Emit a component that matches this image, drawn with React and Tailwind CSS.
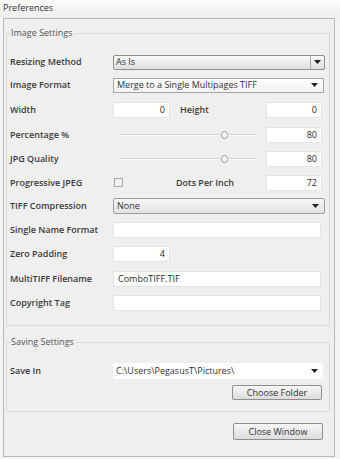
import React from "react";

const Arrow = () => (
  <svg width="7" height="4" viewBox="0 0 7 4" className="shrink-0">
    <path d="M0 0 L7 0 L3.5 4 Z" fill="#222" />
  </svg>
);

function Row({ label, h, children }) {
  return (
    <div className="flex items-center" style={{ height: h }}>
      <div className="w-[103px] shrink-0 font-semibold text-[#3b3b3b]">{label}</div>
      {children}
    </div>
  );
}

function Input({ w, value, align = "right" }) {
  return (
    <div
      className={`h-[16px] bg-white border border-[#e4e4e4] flex items-center px-[4px] text-[#2a2a2a] ${
        align === "right" ? "justify-end" : "justify-start"
      }`}
      style={{ width: w }}
    >
      {value}
    </div>
  );
}

function Slider({ pos }) {
  return (
    <div className="w-[135px] h-[16px] relative ml-[7px] flex items-center">
      <div className="w-full h-[2px] bg-[#d4d4d4] border-b border-[#f8f8f8]" />
      <div
        className="absolute top-[4px] w-[7px] h-[8px] rounded-full border border-[#9a9a9a] bg-[#f4f4f4]"
        style={{ left: pos }}
      />
    </div>
  );
}

function GroupLabel({ children }) {
  return (
    <div className="-mt-[7px] ml-[1px] w-fit h-[12px] bg-[#efefef] pr-[2px] text-[#555]">
      {children}
    </div>
  );
}

export default function App() {
  return (
    <div
      className="w-[340px] h-[459px] bg-[#f4f4f4] text-[9px] leading-[12px] text-[#2a2a2a] overflow-hidden"
      style={{ fontFamily: '"Open Sans", "Noto Sans", sans-serif' }}
    >
      <div className="h-[18px] pl-[3px] pt-[2px] text-[#333] bg-gradient-to-b from-[#fbfbfb] to-[#eeeeee]">
        Preferences
      </div>
      <div className="ml-[3px] w-[332px] h-[439px] border border-[#b9b9b9] bg-[#efefef] flex flex-col">
        {/* Image Settings */}
        <div className="mt-[14px] ml-[2px] mr-[4px] border border-[#d9d9d9] rounded-[2px] pl-[3px] pr-[4px] pb-[10px]">
          <GroupLabel>Image Settings</GroupLabel>
          <div className="mt-[12px]">
            <Row label="Resizing Method" h={22}>
              <div className="w-[213px] h-[15px] border border-[#8f8f8f] rounded-[2px] bg-gradient-to-b from-[#fafafa] to-[#dedede] flex items-stretch">
                <div className="flex-1 pl-[2px] flex items-center text-[#333]">As Is</div>
                <div className="w-[14px] border-l border-[#a8a8a8] flex items-center justify-center">
                  <Arrow />
                </div>
              </div>
            </Row>
            <Row label="Image Format" h={24}>
              <div className="w-[211px] h-[15px] border border-[#a5a5a5] bg-gradient-to-b from-[#ffffff] to-[#f0f0f0] flex items-center pl-[3px] pr-[5px]">
                <div className="flex-1 text-[#333]">Merge to a Single Multipages TIFF</div>
                <Arrow />
              </div>
            </Row>
            <Row label="Width" h={25}>
              <Input w={57} value="0" />
              <div className="w-[96px] pl-[10px] font-semibold text-[#3b3b3b]">Height</div>
              <Input w={56} value="0" />
            </Row>
            <Row label="Percentage %" h={25}>
              <Slider pos={101} />
              <div className="w-[11px]" />
              <Input w={56} value="80" />
            </Row>
            <Row label="JPG Quality" h={24}>
              <Slider pos={101} />
              <div className="w-[11px]" />
              <Input w={56} value="80" />
            </Row>
            <Row label="Progressive JPEG" h={23}>
              <div className="ml-[1px] w-[9px] h-[9px] border border-[#a9a9a9] bg-gradient-to-br from-[#e8e8e8] to-[#fafafa]" />
              <div className="w-[143px] pl-[53px] font-semibold text-[#3b3b3b]">Dots Per Inch</div>
              <Input w={56} value="72" />
            </Row>
            <Row label="TIFF Compression" h={24}>
              <div className="w-[212px] h-[16px] border border-[#9c9c9c] rounded-[2px] bg-gradient-to-b from-[#f6f6f6] to-[#e2e2e2] flex items-center pl-[3px] pr-[5px]">
                <div className="flex-1 text-[#333]">None</div>
                <Arrow />
              </div>
            </Row>
            <Row label="Single Name Format" h={24}>
              <Input w={208} value="" />
            </Row>
            <Row label="Zero Padding" h={24}>
              <Input w={57} value="4" />
            </Row>
            <Row label="MultiTIFF Filename" h={25}>
              <Input w={208} value="ComboTIFF.TIF" align="left" />
            </Row>
            <Row label="Copyright Tag" h={24}>
              <Input w={208} value="" />
            </Row>
          </div>
        </div>

        {/* Saving Settings */}
        <div className="mt-[16px] ml-[2px] mr-[4px] border border-[#d9d9d9] rounded-[2px] pl-[3px] pr-[4px] pb-[11px]">
          <GroupLabel>Saving Settings</GroupLabel>
          <div className="mt-[12px]">
            <Row label="Save In" h={22}>
              <div className="w-[210px] h-[16px] bg-white flex items-center pl-[3px] pr-[5px]">
                <div className="flex-1 text-[#333]">C:\Users\PegasusT\Pictures\</div>
                <Arrow />
              </div>
            </Row>
            <div className="flex justify-end pr-[3px] mt-[3px]">
              <button className="w-[90px] h-[15px] border border-[#8e8e8e] rounded-[2px] bg-gradient-to-b from-[#f7f7f7] to-[#dcdcdc] text-[#333] leading-[13px]">
                Choose Folder
              </button>
            </div>
          </div>
        </div>

        <div className="flex justify-end pr-[11px] mt-[11px]">
          <button className="w-[90px] h-[17px] border border-[#8e8e8e] rounded-[2px] bg-gradient-to-b from-[#f7f7f7] to-[#dcdcdc] text-[#333] leading-[15px]">
            Close Window
          </button>
        </div>
      </div>
    </div>
  );
}
